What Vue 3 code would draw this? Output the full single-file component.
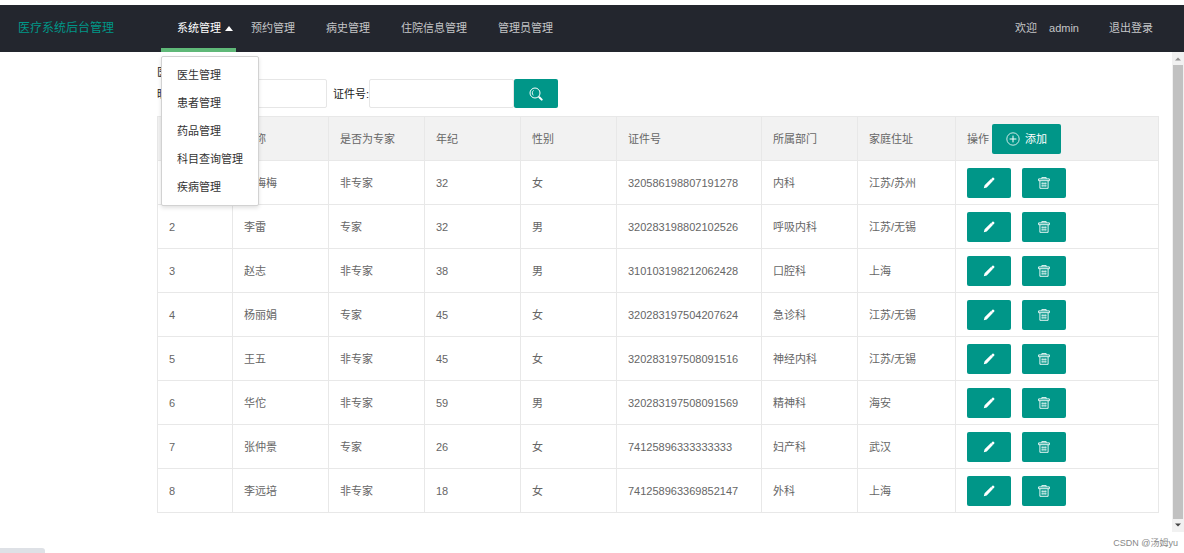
<script setup>
const menus = ['预约管理', '病史管理', '住院信息管理', '管理员管理']
const submenu = ['医生管理', '患者管理', '药品管理', '科目查询管理', '疾病管理']
const columns = [
  { key: 'id', label: '序号' },
  { key: 'name', label: '昵称' },
  { key: 'expert', label: '是否为专家' },
  { key: 'age', label: '年纪' },
  { key: 'sex', label: '性别' },
  { key: 'card', label: '证件号' },
  { key: 'dept', label: '所属部门' },
  { key: 'home', label: '家庭住址' },
]
const rows = [
  { id: 1, name: '韩梅梅', expert: '非专家', age: 32, sex: '女', card: '320586198807191278', dept: '内科', home: '江苏/苏州' },
  { id: 2, name: '李雷', expert: '专家', age: 32, sex: '男', card: '320283198802102526', dept: '呼吸内科', home: '江苏/无锡' },
  { id: 3, name: '赵志', expert: '非专家', age: 38, sex: '男', card: '310103198212062428', dept: '口腔科', home: '上海' },
  { id: 4, name: '杨丽娟', expert: '专家', age: 45, sex: '女', card: '320283197504207624', dept: '急诊科', home: '江苏/无锡' },
  { id: 5, name: '王五', expert: '非专家', age: 45, sex: '女', card: '320283197508091516', dept: '神经内科', home: '江苏/无锡' },
  { id: 6, name: '华佗', expert: '非专家', age: 59, sex: '男', card: '320283197508091569', dept: '精神科', home: '海安' },
  { id: 7, name: '张仲景', expert: '专家', age: 26, sex: '女', card: '74125896333333333', dept: '妇产科', home: '武汉' },
  { id: 8, name: '李远培', expert: '非专家', age: 18, sex: '女', card: '741258963369852147', dept: '外科', home: '上海' },
]
</script>

<template>
  <div class="page">
    <header class="header">
      <div class="logo">医疗系统后台管理</div>
      <nav class="nav">
        <div class="nav-item active">
          <a href="#">系统管理</a>
          <svg class="caret" viewBox="0 0 8 5" aria-hidden="true"><path d="M0 5 4 0 8 5z" /></svg>
          <ul class="dropdown">
            <li v-for="s in submenu" :key="s"><a href="#">{{ s }}</a></li>
          </ul>
        </div>
        <div v-for="m in menus" :key="m" class="nav-item"><a href="#">{{ m }}</a></div>
      </nav>
      <div class="user">
        <span>欢迎</span><a href="#">admin</a><a href="#" class="logout">退出登录</a>
      </div>
    </header>

    <div class="body">
      <main class="main">
        <div class="title">医生管理</div>
        <form class="search" @submit.prevent>
          <label for="nick">昵称:</label>
          <input id="nick" class="nick" type="text" />
          <label for="card">证件号:</label>
          <input id="card" type="text" />
          <button class="btn" type="submit" aria-label="搜索">
            <svg class="icon" viewBox="0 0 14 14" aria-hidden="true">
              <circle cx="6" cy="6" r="5" fill="none" stroke="currentColor" stroke-width="1" />
              <path d="M4.300 8.300A3.200 3.200 0 0 1 4.600 3.400" fill="none" stroke="currentColor" stroke-width=".9" />
              <path d="m10.300 10.300 2.400 2.300" fill="none" stroke="currentColor" stroke-width="2" stroke-linecap="round" />
            </svg>
          </button>
        </form>

        <table class="table">
          <colgroup>
            <col v-for="c in columns" :key="c.key" :class="'col-' + c.key" />
            <col />
          </colgroup>
          <thead>
            <tr>
              <th v-for="c in columns" :key="c.key">{{ c.label }}</th>
              <th>
                <div class="ops-head">
                  <span>操作</span>
                  <button class="btn add" type="button">
                    <svg class="icon" viewBox="0 0 14 14" aria-hidden="true">
                      <circle cx="7" cy="7" r="6.2" fill="none" stroke="currentColor" stroke-width=".8" />
                      <path d="M7 3.6v6.8M3.6 7h6.8" fill="none" stroke="currentColor" />
                    </svg>
                    添加
                  </button>
                </div>
              </th>
            </tr>
          </thead>
          <tbody>
            <tr v-for="r in rows" :key="r.id">
              <td v-for="c in columns" :key="c.key">{{ r[c.key] }}</td>
              <td>
                <div class="ops">
                  <button class="btn" type="button" aria-label="编辑">
                    <svg class="icon small" viewBox="0 0 12 12" aria-hidden="true">
                      <path d="M.8 11.300 1.600 8.200 7.900 2.100 9.900 4.100 3.700 10.400zM8.500 1.500 9.300.8Q10.200.2 11 1T11.200 2.800L10.500 3.500z" fill="currentColor" />
                      <path d="M8 2.600 9.500 1.200 10.900 2.600 9.500 4z" fill="currentColor" />
                    </svg>
                  </button>
                  <button class="btn" type="button" aria-label="删除">
                    <svg class="icon small" viewBox="0 0 12 12" aria-hidden="true">
                      <path d="M3.800 1.700V.6h4.400v1.100M.6 3.700V1.900h10.800v1.800zM1.900 3.900v7.400h8.200V3.900" fill="none" stroke="currentColor" stroke-width=".9" />
                      <path d="M4.200 5v5M6 5v5M7.800 5v5M3.500 6.500h5M3.500 8.700h5" fill="none" stroke="currentColor" stroke-width=".6" />
                    </svg>
                  </button>
                </div>
              </td>
            </tr>
          </tbody>
        </table>
      </main>
      <div class="scrollbar" aria-hidden="true">
        <svg viewBox="0 0 12 12"><path d="M3 8 6 5 9 8z" fill="#8f8f8f" /></svg>
        <div class="thumb"></div>
        <svg viewBox="0 0 12 12"><path d="M3 4 6 7 9 4z" fill="#444" /></svg>
      </div>
    </div>

    <footer class="footer">
      <div class="status"></div>
      <div class="credit">CSDN @汤姆yu</div>
    </footer>
  </div>
</template>

<style>
body {
  background: #fff;
}
</style>

<style scoped>
.page {
  display: flex;
  flex-direction: column;
  min-height: 100vh;
  padding-top: 5px;
  box-sizing: border-box;
  font: 11px/16px "Liberation Sans", "Noto Sans CJK SC", sans-serif;
  color: #222;
}
a {
  color: inherit;
  text-decoration: none;
}
.header {
  display: flex;
  height: 47px;
  line-height: 47px;
  background: #23262e;
  color: #c4c5c7;
}
.logo {
  width: 143px;
  padding-left: 18px;
  font-size: 12px;
  color: #009688;
}
.nav {
  display: flex;
  flex: 1;
}
.nav-item {
  padding: 0 15px 0 16px;
}
.active {
  position: relative;
  display: flex;
  align-items: center;
  gap: 4px;
  padding-right: 3px;
  color: #fff;
  box-shadow: inset 0 -4px #5fb878;
}
.nav-item + .nav-item {
  padding: 0 16px 0 15px;
}
.caret {
  width: 8px;
  height: 5px;
  fill: #fff;
}
.dropdown {
  position: absolute;
  top: 51px;
  left: 0;
  z-index: 2;
  margin: 0;
  padding: 4px 0;
  list-style: none;
  line-height: 28px;
  white-space: nowrap;
  color: #333;
  background: #fff;
  border: 1px solid #d2d2d2;
  border-radius: 2px;
  box-shadow: 0 2px 4px rgba(0, 0, 0, 0.12);
}
.dropdown a {
  display: block;
  padding: 0 15px;
}
.user {
  display: flex;
  gap: 12px;
  padding-right: 31px;
}
.logout {
  margin-left: 18px;
}
.body {
  display: flex;
  flex: 1;
}
.main {
  flex: 1;
  padding: 12px 13px 18px 157px;
}
.search {
  display: flex;
  align-items: center;
  margin-bottom: 8px;
}
.title {
  height: 15px;
}
.search input {
  box-sizing: border-box;
  width: 145px;
  height: 29px;
  padding: 0 8px;
  font: inherit;
  border: 1px solid #e6e6e6;
  border-radius: 2px;
}
.search .nick {
  margin-right: 6px;
}
.btn {
  display: inline-flex;
  align-items: center;
  justify-content: center;
  width: 44px;
  height: 30px;
  padding: 0;
  font: inherit;
  color: #fff;
  background: #009688;
  border: 0;
  border-radius: 2px;
}
.search .btn {
  height: 29px;
}
.add {
  gap: 5px;
  width: 69px;
}
.icon {
  width: 14px;
  height: 14px;
}
.small {
  width: 12px;
  height: 12px;
}
.table {
  width: 100%;
  table-layout: fixed;
  border-collapse: collapse;
  color: #666;
}
.table th,
.table td {
  height: 44px;
  box-sizing: border-box;
  padding: 0 11px;
  font-weight: 400;
  text-align: left;
  border: 1px solid #e8e8e8;
}
.table th {
  background: #f2f2f2;
}
.col-id {
  width: 75px;
}
.col-name,
.col-expert,
.col-age,
.col-sex,
.col-dept {
  width: 96px;
}
.col-card {
  width: 145px;
}
.col-home {
  width: 98px;
}
.ops-head {
  display: flex;
  align-items: center;
  gap: 3px;
}
.ops {
  display: flex;
  gap: 11px;
}
.scrollbar {
  display: flex;
  flex-direction: column;
  width: 12px;
  background: #f1f1f1;
}
.scrollbar svg {
  width: 12px;
  height: 13px;
}
.thumb {
  flex: 1;
  margin: 0 1px;
  background: #c1c1c1;
}
.footer {
  display: flex;
  justify-content: space-between;
  align-items: flex-end;
  height: 21px;
}
.status {
  width: 45px;
  height: 5px;
  background: #dee1e6;
  border-top-right-radius: 3px;
}
.credit {
  padding: 0 6px 2px 0;
  font-size: 9px;
  color: #888;
}
</style>
